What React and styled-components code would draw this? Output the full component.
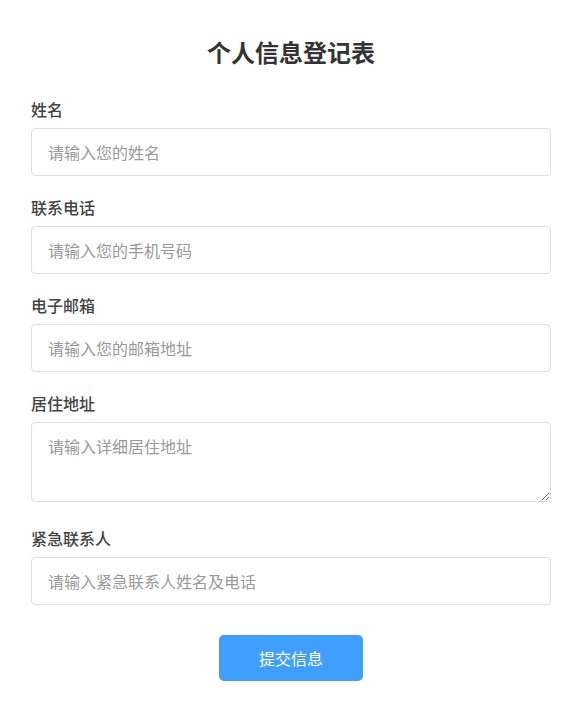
import React from "react";
import styled, { createGlobalStyle } from "styled-components";

const Global = createGlobalStyle`
  html, body { margin: 0; padding: 0; background: #fff; }
  body { font-family: "Noto Sans CJK SC", "Noto Sans", sans-serif; color: #333; }
  * { box-sizing: border-box; }
`;

const Page = styled.div`
  padding: 35px 32px 30px 31px;
`;

const Title = styled.h1`
  margin: 0 0 29px;
  font-size: 24px;
  line-height: 34px;
  font-weight: 700;
  text-align: center;
  color: #333;
`;

const Form = styled.form`
  display: flex;
  flex-direction: column;
`;

const Group = styled.div`
  display: flex;
  flex-direction: column;
  margin-bottom: ${(p) => (p.$extra ? 25 : 20)}px;
`;

const Label = styled.label`
  font-family: "Noto Sans CJK SC Medium", "Noto Sans CJK SC", "Noto Sans", sans-serif;
  font-size: 16px;
  line-height: 22px;
  font-weight: 500;
  color: #444;
  margin-bottom: 8px;
`;

const fieldBase = `
  width: 100%;
  border: 1px solid #dcdfe6;
  border-radius: 4px;
  font-family: "Noto Sans CJK SC", "Noto Sans", sans-serif;
  font-size: 16px;
  color: #333;
  background: #fff;
  padding: 0 16px;
  outline: none;
  &::placeholder { color: #999; }
`;

const Input = styled.input`
  ${fieldBase}
  height: 48px;
  display: block;
`;

const TextArea = styled.textarea`
  ${fieldBase}
  display: block;
  height: 80px;
  padding: 11px 16px;
  line-height: 24px;
  resize: vertical;
`;

const Actions = styled.div`
  display: flex;
  justify-content: center;
  margin-top: 10px;
`;

const Button = styled.button`
  width: 144px;
  height: 46px;
  border: none;
  border-radius: 5px;
  background: #409eff;
  color: #fff;
  font-family: "Noto Sans CJK SC", "Noto Sans", sans-serif;
  font-size: 16px;
  cursor: pointer;
`;

const fields = [
  { id: "name", label: "姓名", ph: "请输入您的姓名" },
  { id: "phone", label: "联系电话", ph: "请输入您的手机号码" },
  { id: "email", label: "电子邮箱", ph: "请输入您的邮箱地址" },
  { id: "addr", label: "居住地址", ph: "请输入详细居住地址", area: true },
  { id: "contact", label: "紧急联系人", ph: "请输入紧急联系人姓名及电话" },
];

export default function App() {
  return (
    <>
      <Global />
      <Page>
        <Title>个人信息登记表</Title>
        <Form onSubmit={(e) => e.preventDefault()}>
          {fields.map((f) => (
            <Group key={f.id} $extra={f.area}>
              <Label htmlFor={f.id}>{f.label}</Label>
              {f.area ? (
                <TextArea id={f.id} placeholder={f.ph} />
              ) : (
                <Input id={f.id} placeholder={f.ph} />
              )}
            </Group>
          ))}
          <Actions>
            <Button type="submit">提交信息</Button>
          </Actions>
        </Form>
      </Page>
    </>
  );
}
